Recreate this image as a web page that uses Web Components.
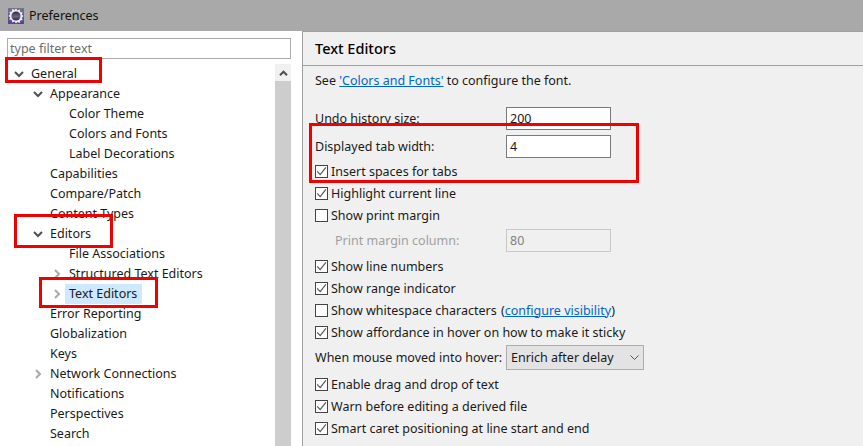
<!DOCTYPE html>
<html lang="en">
<head>
    <meta charset="UTF-8">
    <title>Preferences</title>
    <style>
        html, body { margin: 0; padding: 0; height: 100%; overflow: hidden; background: #f0f0f0; }
        body { font: 12.5px "Noto Sans", sans-serif; color: #1a1a1a; }
    </style>
</head>
<body>

    <pref-window>
        <pref-titlebar>Preferences</pref-titlebar>
        <pref-tree slot="left">
            <tree-item level="0" arrow="open">General</tree-item>
            <tree-item level="1" arrow="open">Appearance</tree-item>
            <tree-item level="2">Color Theme</tree-item>
            <tree-item level="2">Colors and Fonts</tree-item>
            <tree-item level="2">Label Decorations</tree-item>
            <tree-item level="1">Capabilities</tree-item>
            <tree-item level="1">Compare/Patch</tree-item>
            <tree-item level="1">Content Types</tree-item>
            <tree-item level="1" arrow="open">Editors</tree-item>
            <tree-item level="2">File Associations</tree-item>
            <tree-item level="2" arrow="closed">Structured Text Editors</tree-item>
            <tree-item level="2" arrow="closed" selected>Text Editors</tree-item>
            <tree-item level="1">Error Reporting</tree-item>
            <tree-item level="1">Globalization</tree-item>
            <tree-item level="1">Keys</tree-item>
            <tree-item level="1" arrow="closed">Network Connections</tree-item>
            <tree-item level="1">Notifications</tree-item>
            <tree-item level="1">Perspectives</tree-item>
            <tree-item level="1">Search</tree-item>
        </pref-tree>
        <pref-page slot="right">
            <field-row value="200" top="11" height="23">Undo history size:</field-row>
            <field-row value="4" top="5" height="23">Displayed tab width:</field-row>
            <check-row checked style="margin-top:2px">Insert spaces for tabs</check-row>
            <check-row checked>Highlight current line</check-row>
            <check-row>Show print margin</check-row>
            <field-row value="80" top="3" height="23" disabled indent>Print margin column:</field-row>
            <check-row checked style="margin-top:3px">Show line numbers</check-row>
            <check-row checked>Show range indicator</check-row>
            <check-row>Show whitespace characters <span style="margin-left:1px">(<a style="color:#0066cc;text-decoration:underline">configure visibility</a>)</span></check-row>
            <check-row checked>Show affordance in hover on how to make it sticky</check-row>
            <select-row value="Enrich after delay">When mouse moved into hover:</select-row>
            <check-row checked>Enable drag and drop of text</check-row>
            <check-row checked>Warn before editing a derived file</check-row>
            <check-row checked>Smart caret positioning at line start and end</check-row>
        </pref-page>
        <red-box style="left:5px;top:57px;width:97px;height:26px"></red-box>
        <red-box style="left:14px;top:214px;width:99px;height:34px"></red-box>
        <red-box style="left:39px;top:277px;width:119px;height:31px"></red-box>
        <red-box style="left:309px;top:123px;width:330px;height:60px"></red-box>
    </pref-window>

    <script>
        class PrefWindow extends HTMLElement {
            constructor() {
                super();
                this.attachShadow({ mode: 'open' });
                this.shadowRoot.innerHTML = `
                    <style>
                        :host {
                            display: flex;
                            flex-direction: column;
                            position: relative;
                            width: 863px;
                            height: 446px;
                            overflow: hidden;
                        }
                        .main {
                            flex: 1;
                            display: flex;
                            min-height: 0;
                        }
                        .left {
                            width: 302px;
                            flex: none;
                            background: #fff;
                        }
                        .right {
                            flex: 1;
                            min-width: 0;
                            background: #f0f0f0;
                            border-left: 1px solid #a0a0a0;
                            border-top: 1px solid #a0a0a0;
                        }
                    </style>
                    <slot></slot>
                    <div class="main">
                        <div class="left"><slot name="left"></slot></div>
                        <div class="right"><slot name="right"></slot></div>
                    </div>
                `;
            }
        }

        class PrefTitlebar extends HTMLElement {
            constructor() {
                super();
                this.attachShadow({ mode: 'open' });
                this.shadowRoot.innerHTML = `
                    <style>
                        :host {
                            display: flex;
                            align-items: center;
                            height: 31px;
                            flex: none;
                            padding-left: 8px;
                            box-sizing: border-box;
                            background: #a9a9a9;
                            color: #111;
                        }
                        svg { margin-right: 5px; flex: none; }
                    </style>
                    <svg width="16" height="16" viewBox="0 0 16 16">
                        <defs>
                            <linearGradient id="bg" x1="0" y1="0" x2="0" y2="1">
                                <stop offset="0" stop-color="#77748a"/>
                                <stop offset="1" stop-color="#5b3f9c"/>
                            </linearGradient>
                            <linearGradient id="core" x1="0" y1="0" x2="0" y2="1">
                                <stop offset="0" stop-color="#2c2a3a"/>
                                <stop offset="0.55" stop-color="#6b6488"/>
                                <stop offset="1" stop-color="#2c2a3a"/>
                            </linearGradient>
                        </defs>
                        <rect width="16" height="16" fill="url(#bg)"/>
                        <path d="M8 0.5l1.4 1.9 2.3-.8.5 2.4 2.4.5-.8 2.3L15.5 8l-1.7 1.7.8 2.3-2.4.5-.5 2.4-2.3-.8L8 15.5l-1.4-1.9-2.3.8-.5-2.4-2.4-.5.8-2.3L.5 8l1.7-1.7-.8-2.3 2.4-.5.5-2.4 2.3.8z" fill="#eeeeee"/>
                        <circle cx="8" cy="8" r="4.6" fill="url(#core)"/>
                    </svg>
                    <slot></slot>
                `;
            }
        }

        class PrefTree extends HTMLElement {
            constructor() {
                super();
                this.attachShadow({ mode: 'open' });
                this.shadowRoot.innerHTML = `
                    <style>
                        :host {
                            display: block;
                            height: 100%;
                            box-sizing: border-box;
                            padding: 7px 11px 0 7px;
                        }
                        input {
                            display: block;
                            width: 284px;
                            height: 21px;
                            box-sizing: border-box;
                            border: 1px solid #ababab;
                            padding: 0 2px;
                            font: inherit;
                            outline: none;
                        }
                        input::placeholder { color: #6d6d6d; opacity: 1; }
                        .body {
                            display: flex;
                            margin: 5px 0 0 -7px;
                        }
                        .rows {
                            flex: 1;
                            height: 382px;
                            overflow: hidden;
                        }
                        .bar {
                            width: 16px;
                            flex: none;
                            background: #cdcdcd;
                        }
                        .up {
                            height: 17px;
                            background: #f0f0f0;
                            display: flex;
                            align-items: center;
                            justify-content: center;
                        }
                    </style>
                    <input type="text" placeholder="type filter text">
                    <div class="body">
                        <div class="rows"><slot></slot></div>
                        <div class="bar">
                            <div class="up">
                                <svg width="9" height="6" viewBox="0 0 9 6"><path d="M1 5.2l3.5-3.5L8 5.2" fill="none" stroke="#505050" stroke-width="2"/></svg>
                            </div>
                        </div>
                    </div>
                `;
            }
        }

        class TreeItem extends HTMLElement {
            constructor() {
                super();
                this.attachShadow({ mode: 'open' });
            }

            connectedCallback() {
                const level = Number(this.getAttribute('level') || 0);
                const arrow = this.getAttribute('arrow');
                let icon = '';
                if (arrow === 'open') {
                    icon = '<svg width="10" height="7" viewBox="0 0 10 7"><path d="M1 1l4 4 4-4" fill="none" stroke="#505050" stroke-width="2"/></svg>';
                } else if (arrow === 'closed') {
                    icon = '<svg width="7" height="10" viewBox="0 0 7 10"><path d="M1 1l4 4-4 4" fill="none" stroke="#aaaaaa" stroke-width="2"/></svg>';
                }
                this.shadowRoot.innerHTML = `
                    <style>
                        :host {
                            display: flex;
                            align-items: center;
                            height: 20px;
                            padding-left: ${13 + level * 19}px;
                            white-space: nowrap;
                        }
                        .arrow {
                            width: 12px;
                            margin-right: 6px;
                            flex: none;
                            display: flex;
                            justify-content: center;
                        }
                        .label { padding: 0 4px 0 0; line-height: 20px; }
                        :host([selected]) .label { background: #cde8ff; margin-left: -4px; padding: 0 5px 0 4px; }
                    </style>
                    <span class="arrow">${icon}</span>
                    <span class="label"><slot></slot></span>
                `;
            }
        }

        class PrefPage extends HTMLElement {
            constructor() {
                super();
                this.attachShadow({ mode: 'open' });
                this.shadowRoot.innerHTML = `
                    <style>
                        :host {
                            display: block;
                            height: 100%;
                        }
                        h2 {
                            margin: 0;
                            height: 34px;
                            box-sizing: border-box;
                            padding-left: 12px;
                            line-height: 33px;
                            font-size: 14.5px;
                            font-weight: 500;
                            color: #000;
                            border-bottom: 1px solid #a0a0a0;
                        }
                        .see {
                            height: 30px;
                            line-height: 30px;
                            padding-left: 12px;
                        }
                        a { color: #0066cc; text-decoration: underline; }
                        .rows { display: flex; flex-direction: column; padding-left: 12px; }
                    </style>
                    <h2>Text Editors</h2>
                    <div class="see">See <a>'Colors and Fonts'</a> to configure the font.</div>
                    <div class="rows"><slot></slot></div>
                `;
            }
        }

        class FieldRow extends HTMLElement {
            constructor() {
                super();
                this.attachShadow({ mode: 'open' });
            }

            connectedCallback() {
                const top = this.getAttribute('top') || 0;
                const height = this.getAttribute('height') || 23;
                this.shadowRoot.innerHTML = `
                    <style>
                        :host {
                            display: flex;
                            align-items: center;
                            margin-top: ${top}px;
                            height: ${height}px;
                        }
                        .label { width: 191px; flex: none; box-sizing: border-box; }
                        :host([indent]) .label { padding-left: 20px; }
                        :host([disabled]) .label { color: #a0a0a0; }
                        .box {
                            width: 105px;
                            height: 100%;
                            box-sizing: border-box;
                            border: 1px solid #7a7a7a;
                            background: #fff;
                            padding-left: 3px;
                            line-height: 21px;
                        }
                        :host([disabled]) .box {
                            border-color: #c8c8c8;
                            background: #f0f0f0;
                            color: #808080;
                        }
                    </style>
                    <span class="label"><slot></slot></span>
                    <span class="box">${this.getAttribute('value')}</span>
                `;
            }
        }

        class CheckRow extends HTMLElement {
            constructor() {
                super();
                this.attachShadow({ mode: 'open' });
                this.shadowRoot.innerHTML = `
                    <style>
                        :host {
                            display: flex;
                            align-items: center;
                            height: 22px;
                            white-space: pre;
                        }
                        .box {
                            width: 13px;
                            height: 13px;
                            flex: none;
                            box-sizing: border-box;
                            border: 1px solid #444;
                            background: #fff;
                            margin: 1px 3px 0 0;
                            display: flex;
                        }
                        svg { display: none; }
                        :host([checked]) svg { display: block; }
                    </style>
                    <span class="box">
                        <svg width="11" height="11" viewBox="0 0 11 11"><path d="M1.2 5.4l3 3.2L9.9 1.4" fill="none" stroke="#555" stroke-width="1.2"/></svg>
                    </span>
                    <span><slot></slot></span>
                `;
            }
        }

        class SelectRow extends HTMLElement {
            constructor() {
                super();
                this.attachShadow({ mode: 'open' });
            }

            connectedCallback() {
                this.shadowRoot.innerHTML = `
                    <style>
                        :host {
                            display: flex;
                            align-items: center;
                            height: 29px;
                            margin-bottom: 1px;
                        }
                        .label { width: 191px; flex: none; }
                        .box {
                            width: 138px;
                            height: 25px;
                            box-sizing: border-box;
                            border: 1px solid #adadad;
                            background: #e3e3e3;
                            padding: 0 4px 0 4px;
                            display: flex;
                            align-items: center;
                            justify-content: space-between;
                        }
                    </style>
                    <span class="label"><slot></slot></span>
                    <span class="box">
                        ${this.getAttribute('value')}
                        <svg width="9" height="5" viewBox="0 0 9 5"><path d="M.5.5l4 4 4-4" fill="none" stroke="#555"/></svg>
                    </span>
                `;
            }
        }

        class RedBox extends HTMLElement {
            constructor() {
                super();
                this.attachShadow({ mode: 'open' });
                this.shadowRoot.innerHTML = `
                    <style>
                        :host {
                            position: absolute;
                            box-sizing: border-box;
                            border: 3px solid #f00000;
                        }
                    </style>
                `;
            }
        }

        customElements.define('pref-window', PrefWindow);
        customElements.define('pref-titlebar', PrefTitlebar);
        customElements.define('pref-tree', PrefTree);
        customElements.define('tree-item', TreeItem);
        customElements.define('pref-page', PrefPage);
        customElements.define('field-row', FieldRow);
        customElements.define('check-row', CheckRow);
        customElements.define('select-row', SelectRow);
        customElements.define('red-box', RedBox);
    </script>

</body>
</html>
